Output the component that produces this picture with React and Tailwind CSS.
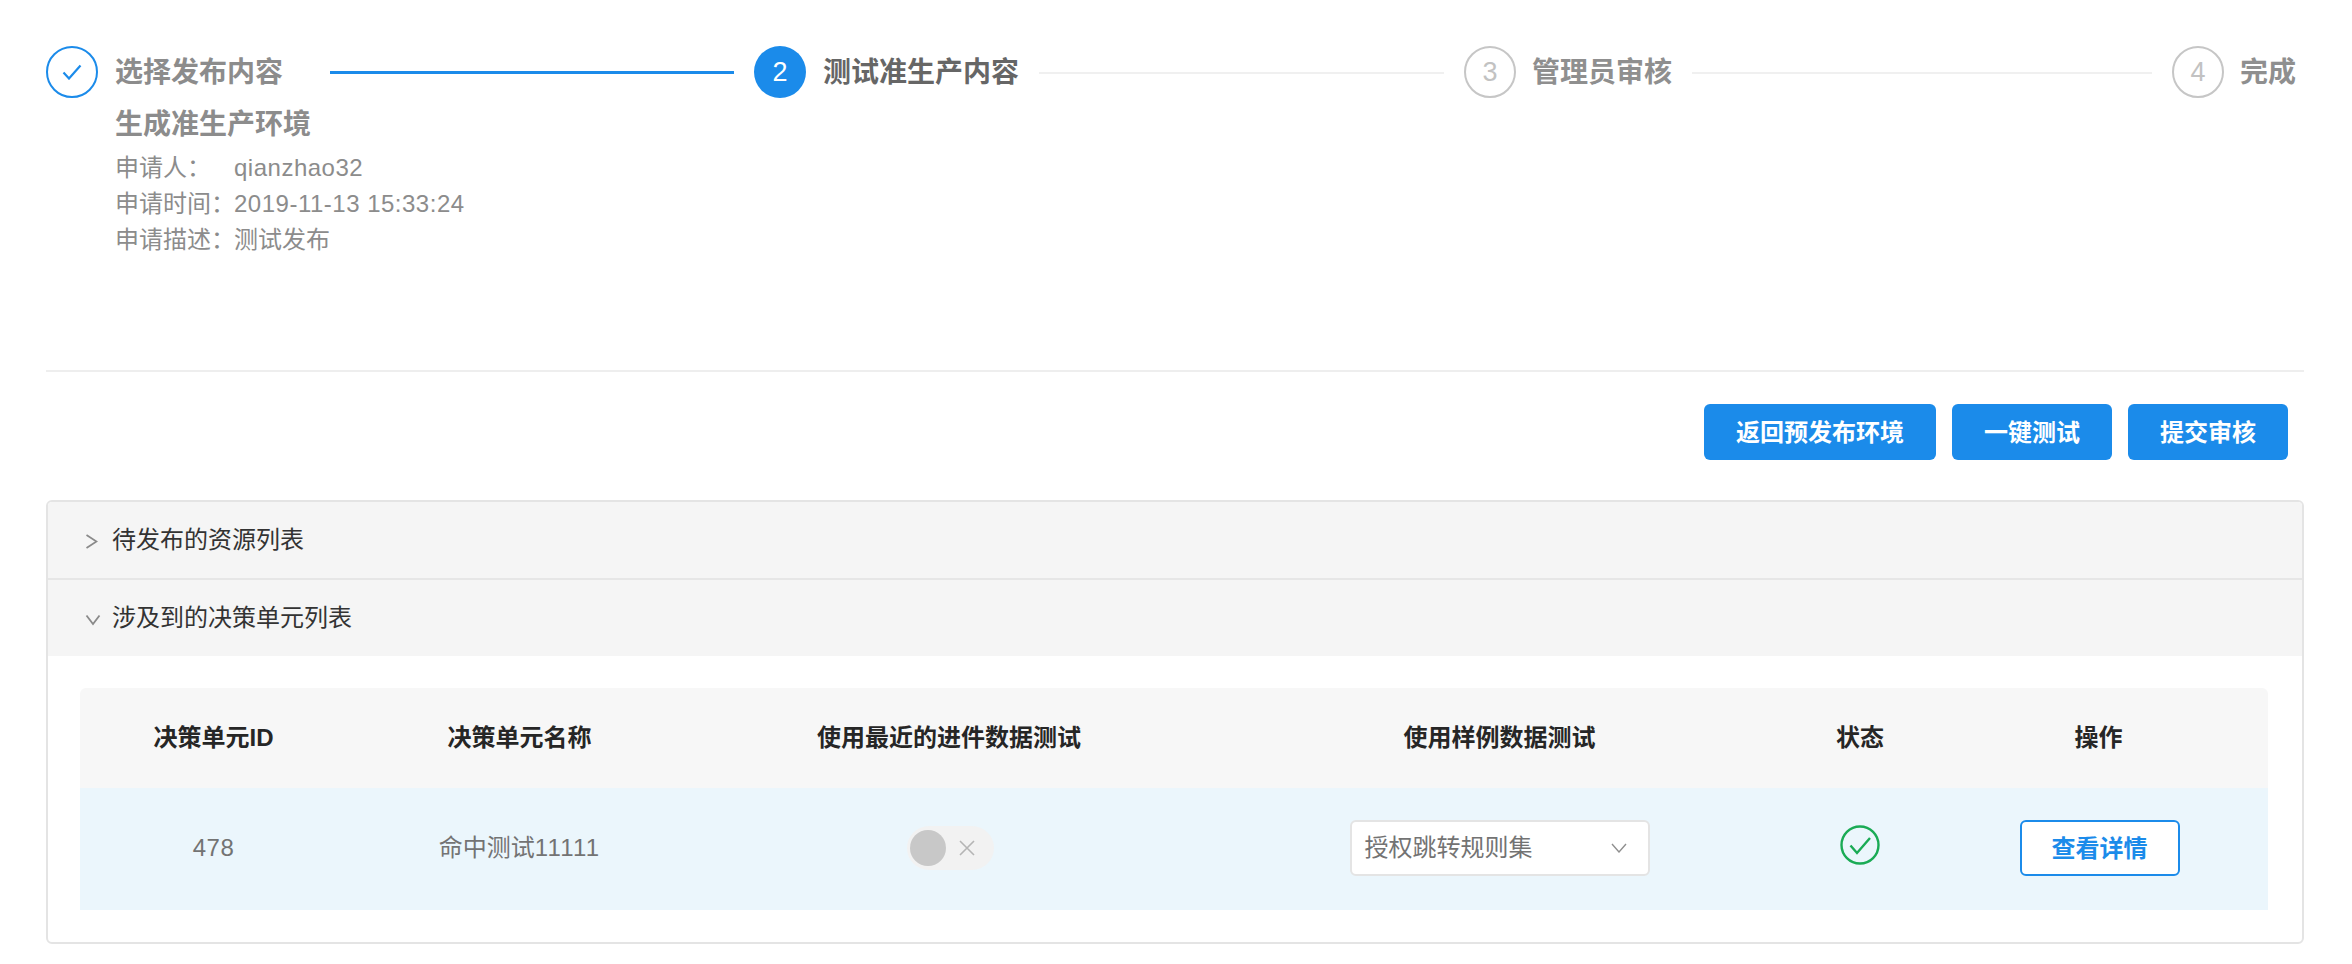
import React from 'react';

const font = 'font-["Liberation_Sans","Noto_Sans_CJK_SC",sans-serif]';

function StepCircle({ state, children }) {
  if (state === 'active') {
    return (
      <div className="w-[52px] h-[52px] shrink-0 rounded-full bg-[#1b8bea] text-white text-[27px] flex items-center justify-center">
        {children}
      </div>
    );
  }
  if (state === 'done') {
    return (
      <div className="w-[52px] h-[52px] shrink-0 rounded-full border-2 border-[#1b8bea] flex items-center justify-center">
        <svg width="20" height="16" viewBox="0 0 20 16" fill="none">
          <path d="M1.5 8.5 L7 14.5 L18.5 1.5" stroke="#1b8bea" strokeWidth="2.2" />
        </svg>
      </div>
    );
  }
  return (
    <div className="w-[52px] h-[52px] shrink-0 rounded-full border-2 border-[#c6c6c6] text-[#c2c2c2] text-[27px] flex items-center justify-center">
      {children}
    </div>
  );
}

function Detail({ label, value, latin }) {
  return (
    <div className="flex h-[36px] items-center whitespace-nowrap text-[24px] text-[#8c8c8c]">
      <span className="w-[119px] shrink-0">{label}</span>
      <span className={latin ? 'tracking-[0.5px]' : ''}>{value}</span>
    </div>
  );
}

function Steps() {
  return (
    <div className="flex h-[326px] border-b-2 border-[#eeeeee]">
      {/* step 1 */}
      <div className="flex w-[708px] pr-[20px]">
        <StepCircle state="done" />
        <div className="ml-[17px] w-[195px] shrink-0">
          <div className="text-[28px] leading-[54px] font-bold text-[#8c8c8c] whitespace-nowrap">选择发布内容</div>
          <div className="mt-[7px] text-[28px] leading-[36px] font-bold text-[#8c8c8c] whitespace-nowrap">生成准生产环境</div>
          <div className="mt-[7px]">
            <Detail label="申请人：" value="qianzhao32" latin />
            <Detail label="申请时间：" value="2019-11-13 15:33:24" latin />
            <Detail label="申请描述：" value="测试发布" />
          </div>
        </div>
        <div className="flex-1 h-[3px] mt-[25px] ml-[20px] bg-[#1b8bea]" />
      </div>
      {/* step 2 */}
      <div className="flex w-[710px] pr-[20px]">
        <StepCircle state="active">2</StepCircle>
        <div className="ml-[17px] text-[28px] leading-[54px] font-bold text-[#666666] whitespace-nowrap">测试准生产内容</div>
        <div className="flex-1 h-[2px] mt-[26px] ml-[20px] bg-[#f0f0f0]" />
      </div>
      {/* step 3 */}
      <div className="flex w-[708px] pr-[20px]">
        <StepCircle>3</StepCircle>
        <div className="ml-[16px] text-[28px] leading-[54px] font-bold text-[#8f8f8f] whitespace-nowrap">管理员审核</div>
        <div className="flex-1 h-[2px] mt-[26px] ml-[20px] bg-[#f0f0f0]" />
      </div>
      {/* step 4 */}
      <div className="flex">
        <StepCircle>4</StepCircle>
        <div className="ml-[16px] text-[28px] leading-[54px] font-bold text-[#8f8f8f] whitespace-nowrap">完成</div>
      </div>
    </div>
  );
}

function Actions() {
  const btn = 'h-[56px] pt-[2px] rounded-[6px] bg-[#1b8bea] text-white text-[24px] font-bold flex items-center justify-center';
  return (
    <div className="flex justify-end gap-[16px] mt-[32px] pr-[16px]">
      <button className={`${btn} w-[232px]`}>返回预发布环境</button>
      <button className={`${btn} w-[160px]`}>一键测试</button>
      <button className={`${btn} w-[160px]`}>提交审核</button>
    </div>
  );
}

function PanelHeader({ open, title, className }) {
  return (
    <div className={`flex items-center bg-[#f5f5f5] text-[24px] text-[#333333] ${className}`}>
      <div className="w-[64px] pl-[37px] shrink-0">
        {open ? (
          <svg width="16" height="12" viewBox="0 0 16 12" fill="none" className="mt-[3px]">
            <path d="M1.5 1.5 L8 10 L14.5 1.5" stroke="#8a8a8a" strokeWidth="1.8" />
          </svg>
        ) : (
          <svg width="13" height="15" viewBox="0 0 13 15" fill="none" className="mt-[3px]">
            <path d="M1.5 1 L11.5 7.5 L1.5 14" stroke="#8a8a8a" strokeWidth="1.8" />
          </svg>
        )}
      </div>
      <span>{title}</span>
    </div>
  );
}

function DecisionTable() {
  const th = 'h-[100px] font-bold text-[24px] text-[#262626] text-center';
  return (
    <table className="w-[2188px] table-fixed border-collapse">
      <thead>
        <tr className="bg-[#f7f7f7]">
          <th className={`${th} w-[267px] rounded-tl-[6px]`}>决策单元ID</th>
          <th className={`${th} w-[345px]`}>决策单元名称</th>
          <th className={`${th} w-[514px]`}>使用最近的进件数据测试</th>
          <th className={`${th} w-[587px]`}>使用样例数据测试</th>
          <th className={`${th} w-[134px]`}>状态</th>
          <th className={`${th} w-[341px] pl-[2px] rounded-tr-[6px]`}>操作</th>
        </tr>
      </thead>
      <tbody>
        <tr className="h-[122px] bg-[#ebf6fc] text-[24px] text-[#737373] text-center">
          <td className="tracking-[0.5px] pb-[2px]">478</td>
          <td className="pb-[2px]">命中测试<span className="tracking-[1.2px]">11111</span></td>
          <td className="pb-[2px]">
            <div className="mx-auto w-[87px] h-[44px] rounded-full bg-[#f2f2f2] flex items-center relative left-[1px]">
              <div className="w-[36px] h-[36px] ml-[3px] rounded-full bg-[#c8c8c8]" />
              <svg width="16" height="16" viewBox="0 0 16 16" fill="none" className="ml-[13px]">
                <path d="M1 1 L15 15 M15 1 L1 15" stroke="#b5b5b5" strokeWidth="1.6" />
              </svg>
            </div>
          </td>
          <td className="pb-[2px]">
            <div className="mx-auto w-[300px] h-[56px] rounded-[6px] border-2 border-[#e4e4e4] bg-white flex items-center justify-between pl-[13px] pr-[21px] text-[#737373]">
              <span>授权跳转规则集</span>
              <svg width="16" height="10" viewBox="0 0 16 10" fill="none">
                <path d="M1 1 L8 9 L15 1" stroke="#8f8f8f" strokeWidth="1.4" />
              </svg>
            </div>
          </td>
          <td className="pb-[2px]">
            <svg width="40" height="40" viewBox="0 0 40 40" fill="none" className="mx-auto mt-[-6px]">
              <circle cx="20" cy="20" r="18.5" stroke="#1aab55" strokeWidth="2.4" />
              <path d="M10.5 20.5 L17 28 L30 13" stroke="#1aab55" strokeWidth="2.4" />
            </svg>
          </td>
          <td className="pb-[2px]">
            <button className="mx-auto block w-[160px] h-[56px] pt-[2px] rounded-[6px] border-2 border-[#1b8bea] bg-white text-[#1b8bea] text-[24px] font-bold relative left-[2px]">
              查看详情
            </button>
          </td>
        </tr>
      </tbody>
    </table>
  );
}

export default function App() {
  return (
    <div className={`${font} bg-white min-h-[964px] pt-[46px] pl-[46px] pr-[48px]`}>
      <Steps />
      <Actions />
      {/* collapse panels */}
      <div className="mt-[40px] h-[444px] rounded-[6px] border-2 border-[#e4e4e4] overflow-hidden">
        <PanelHeader title="待发布的资源列表" className="h-[78px] border-b-2 border-[#e6e6e6]" />
        <PanelHeader open title="涉及到的决策单元列表" className="h-[76px]" />
        <div className="pt-[32px] pl-[32px]">
          <DecisionTable />
        </div>
      </div>
    </div>
  );
}
